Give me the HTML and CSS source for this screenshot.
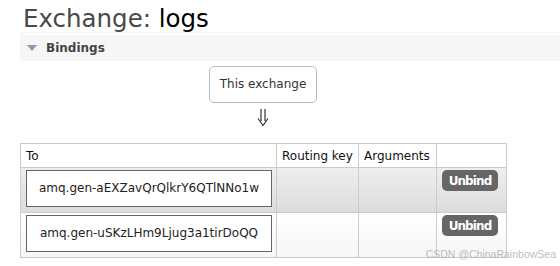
FILE: index.html
```html
<!DOCTYPE html>
<html lang="en">
  <head>
    <meta charset="UTF-8" />
    <title>Exchange: logs</title>
    <link rel="stylesheet" href="styles.css">
  </head>

  <body>
    <h1>Exchange: <b>logs</b></h1>
    <div class="section">
      <h2><span class="toggle"></span>Bindings</h2>
      <div class="bindings-wrapper">
        <p class="source"><span class="exchange-box">This exchange</span></p>
        <div class="arrow">
          <svg width="12" height="18" viewBox="0 0 12 18">
            <path d="M4 0 V12 M8 0 V12 M1 9.5 L6 16.5 L11 9.5" fill="none" stroke="#333" stroke-width="1.2" />
          </svg>
        </div>
        <table class="list">
          <colgroup>
            <col class="col-to" />
            <col class="col-key" />
            <col class="col-args" />
            <col class="col-btn" />
          </colgroup>
          <thead>
            <tr>
              <th>To</th>
              <th>Routing key</th>
              <th>Arguments</th>
              <th></th>
            </tr>
          </thead>
          <tbody>
            <tr class="alt1">
              <td><span class="queue">amq.gen-aEXZavQrQlkrY6QTlNNo1w</span></td>
              <td></td>
              <td></td>
              <td><button class="unbind">Unbind</button></td>
            </tr>
            <tr class="alt2">
              <td><span class="queue">amq.gen-uSKzLHm9Ljug3a1tirDoQQ</span></td>
              <td></td>
              <td></td>
              <td><button class="unbind">Unbind</button></td>
            </tr>
          </tbody>
        </table>
      </div>
    </div>
    <div class="watermark">CSDN @ChinaRainbowSea</div>
  </body>
</html>
```

FILE: styles.css
```css
body {
  margin: 0;
  font-family: "DejaVu Sans", Verdana, sans-serif;
  font-size: 12px;
  color: #222;
  background: white;
  overflow: hidden;
}

h1 {
  margin: 5px 0 0 23px;
  font-size: 24.5px;
  line-height: 27px;
  font-weight: normal;
  color: #484848;
  white-space: nowrap;
}

h1 b {
  font-weight: normal;
  color: #000;
}

.section {
  margin-left: 20px;
}

.section h2 {
  display: flex;
  align-items: center;
  height: 27px;
  margin: 0;
  padding: 2px 0 0 7px;
  font-size: 12px;
  font-weight: bold;
  color: #444;
  background: linear-gradient(#f6f6f6 2px, #fff 2px, #fff 3px, #f6f6f6 3px);
}

.toggle {
  width: 0;
  height: 0;
  margin-right: 9px;
  border-top: 6px solid #999;
  border-left: 5px solid transparent;
  border-right: 5px solid transparent;
}

.bindings-wrapper {
  width: 486px;
  margin-top: 5px;
}

.source {
  margin: 0;
  text-align: center;
}

.exchange-box {
  display: inline-block;
  padding: 10px 10px;
  line-height: 15px;
  border: 1px solid #bbb;
  border-radius: 5px;
  color: #333;
}

.arrow {
  display: flex;
  justify-content: center;
  height: 34px;
  padding-top: 6px;
}

table.list {
  table-layout: fixed;
  width: 486px;
  border-collapse: collapse;
  border: 1px solid #ccc;
}

.col-to {
  width: 256px;
}

.col-key {
  width: 82px;
}

.col-args {
  width: 78px;
}

.col-btn {
  width: 70px;
}

table.list th,
table.list td {
  border: 1px solid #ccc;
  text-align: left;
  vertical-align: top;
}

table.list th {
  height: 23px;
  padding: 0 5px;
  font-weight: normal;
  color: #111;
  vertical-align: middle;
  white-space: nowrap;
}

table.list td {
  height: 40px;
  padding: 2px 4px 2px 5px;
}

tr.alt1 {
  background: linear-gradient(#eee, #dcdcdc);
}

tr.alt2 {
  background: linear-gradient(#fff, #f6f6f6);
}

.queue {
  display: block;
  height: 35px;
  line-height: 35px;
  border: 1px solid #666;
  background: white;
  text-align: center;
  color: #222;
  white-space: nowrap;
}

.unbind {
  width: 56px;
  height: 21px;
  padding: 0;
  border: none;
  border-radius: 5px;
  background-color: #666;
  color: white;
  font-family: "DejaVu Sans", Verdana, sans-serif;
  font-size: 12px;
  font-weight: bold;
  letter-spacing: -0.9px;
}

.watermark {
  position: absolute;
  right: 4px;
  bottom: 6px;
  font-family: "Liberation Sans", Arial, sans-serif;
  font-size: 10.5px;
  color: rgba(160, 160, 160, 0.7);
}
```
